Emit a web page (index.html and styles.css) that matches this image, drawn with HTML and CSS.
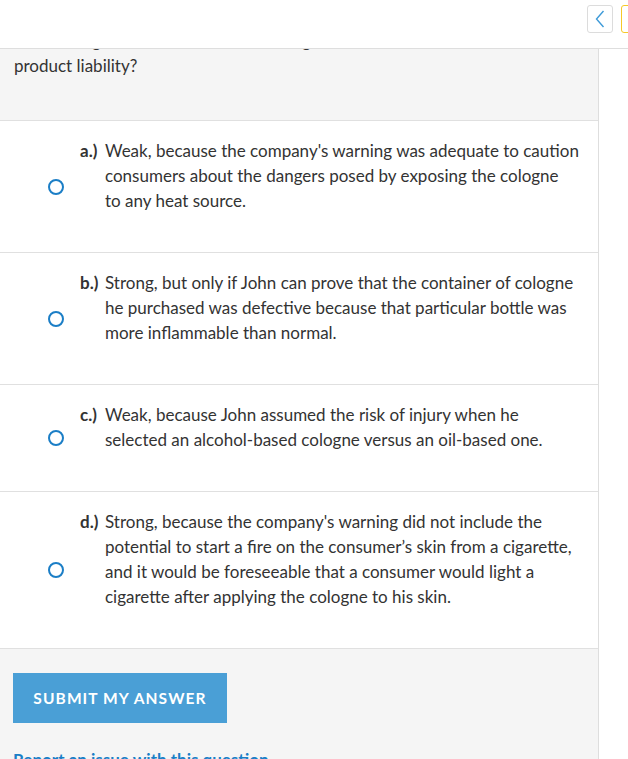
FILE: index.html
```html
<!DOCTYPE html>
<html lang="en">
<head>
<meta charset="utf-8">
<title>Question</title>
<link rel="stylesheet" href="styles.css">
</head>
<body>
<header class="topbar">
  <button class="nav-btn back" aria-label="Back">
    <svg width="10" height="18" viewBox="0 0 10 18"><path d="M8.5 1 L1.5 9 L8.5 17" fill="none" stroke="#3d9ad8" stroke-width="1.4"/></svg>
  </button>
  <button class="nav-btn flag" aria-label="Flag"></button>
</header>
<div class="layout">
  <main class="panel">
    <section class="question">
      <p>How strong of a case does John have against the manufacturer for strict product liability?</p>
    </section>
    <ul class="options">
      <li class="option">
        <span class="radio"></span>
        <span class="label">a.)</span>
        <span class="text">Weak, because the company's warning was adequate to caution<br>consumers about the dangers posed by exposing the cologne<br>to any heat source.</span>
      </li>
      <li class="option">
        <span class="radio"></span>
        <span class="label">b.)</span>
        <span class="text">Strong, but only if John can prove that the container of cologne<br>he purchased was defective because that particular bottle was<br>more inflammable than normal.</span>
      </li>
      <li class="option">
        <span class="radio"></span>
        <span class="label">c.)</span>
        <span class="text">Weak, because John assumed the risk of injury when he<br>selected an alcohol-based cologne versus an oil-based one.</span>
      </li>
      <li class="option">
        <span class="radio"></span>
        <span class="label">d.)</span>
        <span class="text">Strong, because the company's warning did not include the<br>potential to start a fire on the consumer’s skin from a cigarette,<br>and it would be foreseeable that a consumer would light a<br>cigarette after applying the cologne to his skin.</span>
      </li>
    </ul>
    <section class="actions">
      <button class="submit">SUBMIT MY ANSWER</button>
      <a class="report" href="#">Report an issue with this question</a>
    </section>
  </main>
  <aside class="side"></aside>
</div>
</body>
</html>
```
FILE: styles.css
```css
html, body {
  margin: 0;
  padding: 0;
  background: #ffffff;
  height: 100%;
  overflow: hidden;
}
body {
  font-family: "Lato", "Liberation Sans", sans-serif;
  font-size: 17px;
  color: #333333;
}
.topbar {
  position: absolute;
  top: 0;
  left: 0;
  right: 0;
  height: 43px;
  background: #ffffff;
  border-bottom: 1px solid #dedede;
  display: flex;
  align-items: flex-start;
  justify-content: flex-end;
  gap: 8px;
  padding-top: 5px;
  box-sizing: content-box;
  z-index: 2;
}
.nav-btn {
  width: 26px;
  height: 28px;
  border-radius: 3px;
  background: #ffffff;
  padding: 0;
  display: flex;
  align-items: center;
  justify-content: center;
  box-sizing: border-box;
}
.back {
  border: 1.5px solid #dcdcdc;
}
.flag {
  border: 1.5px solid #f6c928;
  margin-right: -19px;
}
.layout {
  display: flex;
  min-height: 100%;
}
.panel {
  width: 598px;
  border-right: 1px solid #dedede;
  background: #f5f5f5;
  flex: none;
}
.side {
  flex: 1;
}
.question {
  padding: 28px 14px 42px 14px;
  border-bottom: 1px solid #e0e0e0;
}
.question p {
  margin: 0;
  line-height: 25px;
}
.options {
  list-style: none;
  margin: 0;
  padding: 0;
  background: #ffffff;
}
.option {
  display: flex;
  align-items: center;
  border-bottom: 1px solid #e0e0e0;
  padding-left: 48px;
  padding-right: 6px;
}
.radio {
  width: 16px;
  height: 16px;
  border: 2px solid #1b7ec6;
  border-radius: 50%;
  box-sizing: border-box;
  flex: none;
  margin-right: 16px;
}
.label {
  width: 25px;
  flex: none;
  font-weight: 700;
  line-height: 25px;
  align-self: flex-start;
  padding-top: 17px;
}
.text {
  flex: 1;
  line-height: 25px;
  padding: 17px 0 39px 0;
}
.actions {
  padding: 24px 13px 0 13px;
}
.submit {
  display: block;
  width: 214px;
  height: 50px;
  background: #4a9fd6;
  color: #ffffff;
  border: none;
  font-family: inherit;
  font-weight: 700;
  font-size: 15.5px;
  letter-spacing: 1.1px;
  padding: 0;
}
.report {
  display: block;
  margin-top: 24px;
  color: #1a7fc7;
  font-weight: 700;
  text-decoration: none;
  line-height: 25px;
}
```
